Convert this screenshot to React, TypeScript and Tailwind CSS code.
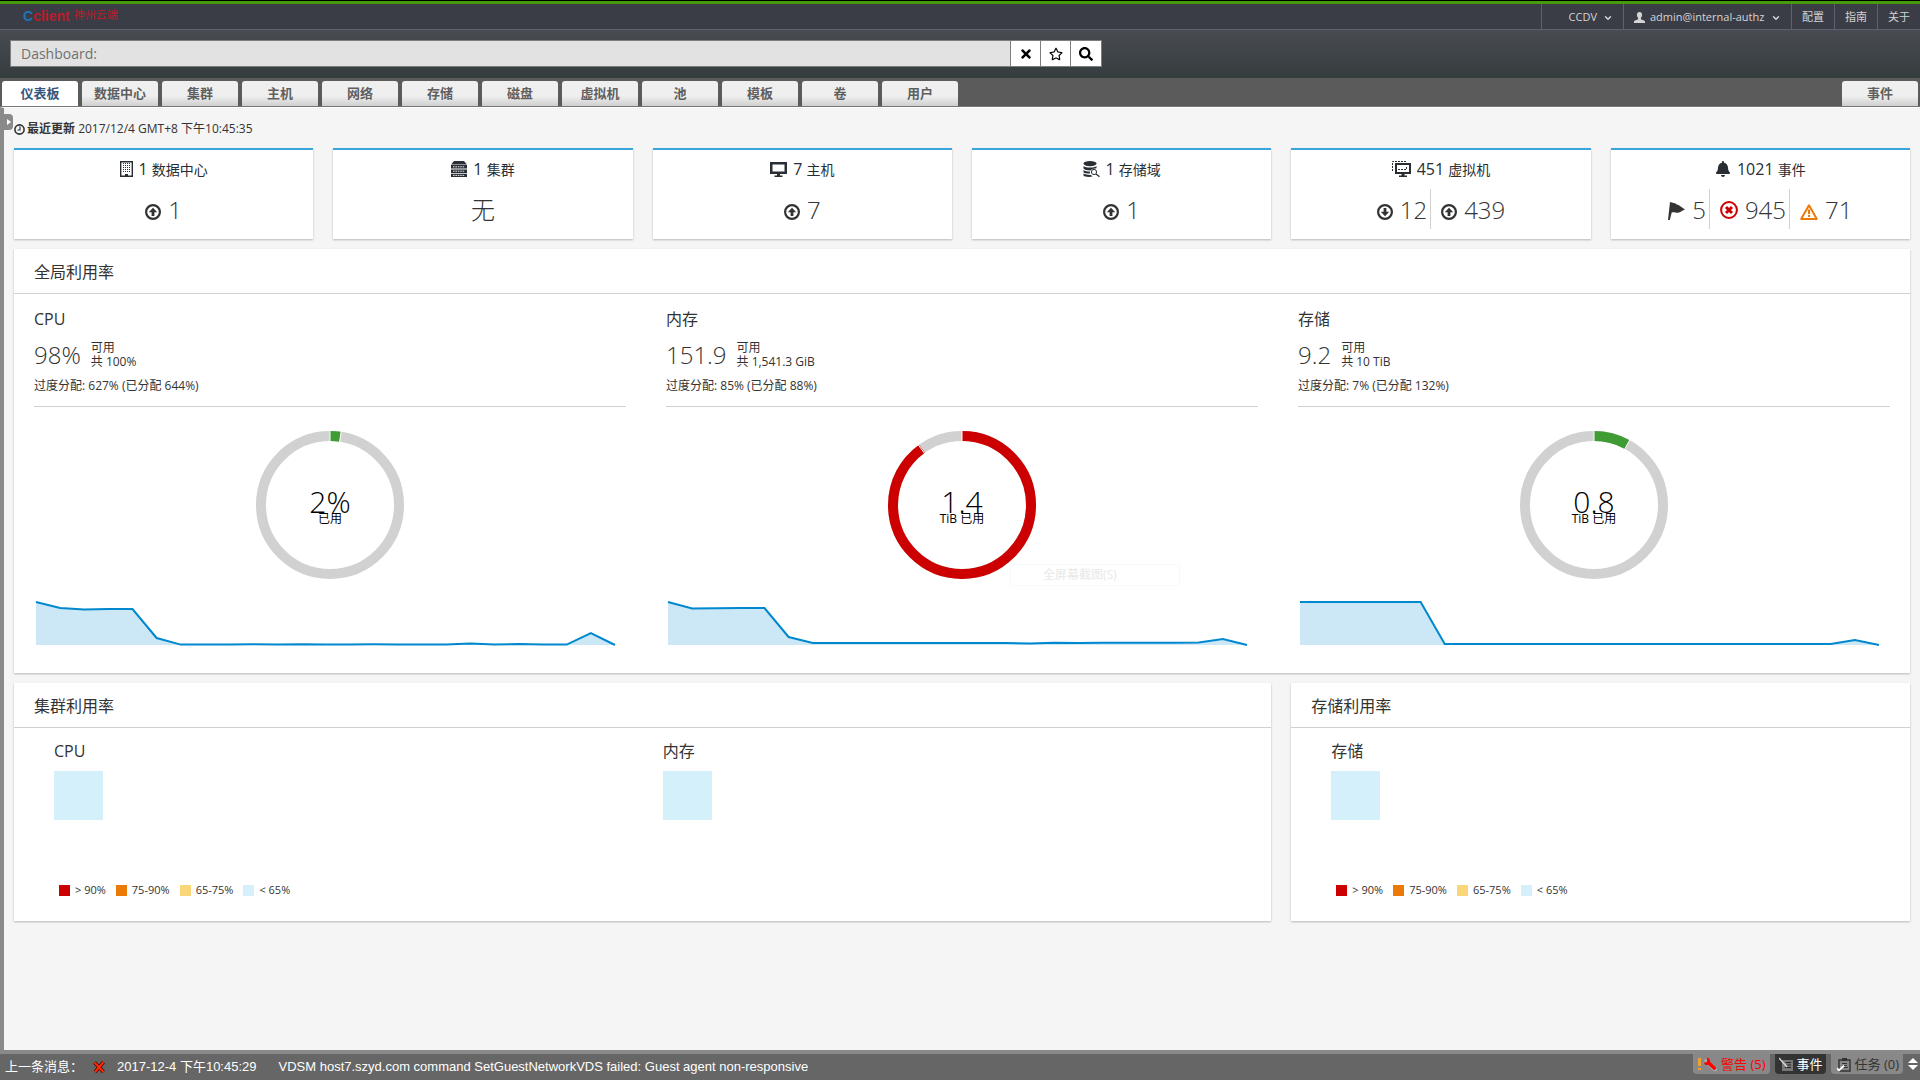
import React, { useState } from 'react';
import { FaBell, FaRegStar, FaSearch, FaTimes } from 'react-icons/fa';
import { ChevronDown } from 'lucide-react';

type IconProps = { className?: string };

const ClockIcon: React.FC<IconProps> = ({ className }) => (
  <svg viewBox="0 0 11 11" className={className} aria-hidden="true">
    <circle cx="5.500" cy="5.500" r="4.600" fill="none" stroke="currentColor" strokeWidth="1.600" />
    <path d="M6 2.500V6H3.500" fill="none" stroke="currentColor" strokeWidth="1.200" />
  </svg>
);

const BuildingIcon: React.FC<IconProps> = ({ className }) => (
  <svg viewBox="0 0 13 16" className={className} aria-hidden="true">
    <path d="M0.700 0.700h11.600v14.600H0.700z" fill="none" stroke="currentColor" strokeWidth="1.400" />
    <path d="M3 2.500h7M3 4.500h7M3 6.500h7M3 8.500h7M3 10.500h7" stroke="currentColor" strokeDasharray="1 1" fill="none" />
    <path d="M5 13h3v3H5z" fill="currentColor" />
  </svg>
);

const ClusterIcon: React.FC<IconProps> = ({ className }) => (
  <svg viewBox="0 0 16 16" className={className} aria-hidden="true">
    <path d="M3 0h10l3 3.500H0zM0 4h16v3.600H0zM0 8.400h16V12H0zM0 12.800h16V16H0z" fill="currentColor" />
    <path d="M2 5.800h12M2 10.200h12M2 14.400h12" stroke="#fff" strokeWidth="0.900" strokeDasharray="1.600 0.800" />
  </svg>
);

const ScreenIcon: React.FC<IconProps> = ({ className }) => (
  <svg viewBox="0 0 17 15" className={className} aria-hidden="true">
    <path d="M0 0h17v12H0zM2.500 2.500v7h12v-7z" fill="currentColor" fillRule="evenodd" />
    <path d="M7 12h3v1.500h2.500V15h-8v-1.500H7z" fill="currentColor" />
  </svg>
);

const StorageIcon: React.FC<IconProps> = ({ className }) => (
  <svg viewBox="0 0 17 16" className={className} aria-hidden="true">
    <ellipse cx="7" cy="2.600" rx="6.500" ry="2.600" fill="currentColor" />
    <path d="M0.500 5c2 2 11 2 13 0v2.200l-3 .6c-1.500.2-2.500 1.200-3 1.800C4 9.500 1 8.800.5 7.600z" fill="currentColor" />
    <path d="M0.500 9c1.200 1.200 4 1.600 6.300 1.600l.2 2c-3 0-5.700-.4-6.500-1.400zM.5 12.600c1.200 1 4.500 1.500 7.500 1.400l1.500 1.600C6 16.300 1.500 16 .5 14.500z" fill="currentColor" />
    <circle cx="11" cy="11" r="2.600" fill="none" stroke="currentColor" />
    <path d="M13 13l3.500 2.700" stroke="currentColor" strokeWidth="1.300" />
  </svg>
);

const VirtualMachineIcon: React.FC<IconProps> = ({ className }) => (
  <svg viewBox="0 0 19 16" className={className} aria-hidden="true">
    <path d="M0.500 10V0.500h14" fill="none" stroke="currentColor" strokeDasharray="2 1" />
    <path d="M3 2h16v11H3zM5 4v7h12V4z" fill="currentColor" fillRule="evenodd" />
    <path d="M6 8.500h8.500V5" fill="none" stroke="currentColor" strokeDasharray="2 1" />
    <path d="M9.500 13h3v1.500H15V16H7v-1.500h2.500z" fill="currentColor" />
  </svg>
);

const UpIcon: React.FC<IconProps> = ({ className }) => (
  <svg viewBox="0 0 16 16" className={className} aria-hidden="true">
    <circle cx="8" cy="8" r="6.900" fill="none" stroke="currentColor" strokeWidth="2.200" />
    <path d="M8 3.800l4.200 4.400H9.400V12H6.600V8.200H3.800z" fill="currentColor" />
  </svg>
);

const DownIcon: React.FC<IconProps> = ({ className }) => (
  <svg viewBox="0 0 16 16" className={className} aria-hidden="true">
    <circle cx="8" cy="8" r="6.900" fill="none" stroke="currentColor" strokeWidth="2.200" />
    <path d="M8 12.200l4.200-4.400H9.400V4H6.600v3.800H3.800z" fill="currentColor" />
  </svg>
);

const FlagIcon: React.FC<IconProps> = ({ className }) => (
  <svg viewBox="0 0 17 18" className={className} aria-hidden="true">
    <path d="M2 0l1.800.4c3.200.2 4.200 1.800 6.700 2.600l6.500 4.500c-2.500.6-4.500 3.300-7 3.300-2.400 0-4-1-6.300-.4L1.800 18H0z" fill="currentColor" />
  </svg>
);

const ErrorIcon: React.FC<IconProps> = ({ className }) => (
  <svg viewBox="0 0 18 18" className={className} aria-hidden="true">
    <circle cx="9" cy="9" r="7.900" fill="none" stroke="currentColor" strokeWidth="2" />
    <path d="M6 6l6 6M12 6l-6 6" stroke="currentColor" strokeWidth="3" />
  </svg>
);

const WarningIcon: React.FC<IconProps> = ({ className }) => (
  <svg viewBox="0 0 18 16" className={className} aria-hidden="true">
    <path d="M9 1.300L16.800 15H1.200z" fill="none" stroke="currentColor" strokeWidth="2" strokeLinejoin="round" />
    <path d="M9 5.500V10M9 11v2" stroke="currentColor" strokeWidth="2.200" />
  </svg>
);

const UserIcon: React.FC<IconProps> = ({ className }) => (
  <svg viewBox="0 0 11 11" className={className} aria-hidden="true">
    <path d="M5.500 0c1.700 0 2.600 1.200 2.600 2.800 0 1.500-.7 2.500-1.200 3.200v1.300L11 9v2H0V9l4.100-1.700V6C3.600 5.300 2.900 4.300 2.900 2.800 2.900 1.200 3.800 0 5.500 0z" fill="currentColor" />
  </svg>
);

const AlertToolIcon: React.FC<IconProps> = ({ className }) => (
  <svg viewBox="0 0 20 14" className={className} aria-hidden="true">
    <path d="M1 1h3v8H1zM1 11h3v2H1z" fill="#f0a030" />
    <path d="M9.500 4l5.500 5.500 3 3" stroke="#aaa" strokeWidth="4.500" strokeLinecap="round" />
    <path d="M7 5.500l2.500-.2.800-1.500L9.500.8c2.300 0 3.800 1.500 3.500 3.700l6 6c.8 1.200-1.200 3.200-2.400 2.200L11 7.800C9.500 8.500 7.300 7.700 7 5.500z" fill="#f00" />
  </svg>
);

const EventsIcon: React.FC<IconProps> = ({ className }) => (
  <svg viewBox="0 0 14 14" className={className} aria-hidden="true">
    <path d="M3 3h11v11H3z" fill="#777" />
    <path d="M7 5.500h5M8.500 8h3.500M6 10.500h6" stroke="#222" />
    <path d="M0 1l8 9" stroke="#ddd" strokeWidth="1.300" />
  </svg>
);

const TasksIcon: React.FC<IconProps> = ({ className }) => (
  <svg viewBox="0 0 14 15" className={className} aria-hidden="true">
    <path d="M2 3h11v11H2z" fill="none" stroke="#333" strokeWidth="1.400" />
    <path d="M5 1h5v3H5z" fill="#333" />
    <path d="M5 6.500h5M5 8.500h5M7 10.500h4" stroke="#333" />
    <path d="M0 11l2 2.500 5-5" fill="none" stroke="#fff" strokeWidth="1.800" />
  </svg>
);

const MAIN_TABS = ['仪表板', '数据中心', '集群', '主机', '网络', '存储', '磁盘', '虚拟机', '池', '模板', '卷', '用户'];

type Status = { icon?: React.ReactNode; value: string };

const INVENTORY: { icon: React.ReactNode; count: number; label: string; statuses: Status[] }[] = [
  {
    icon: <BuildingIcon className="h-4 w-[13px]" />,
    count: 1,
    label: '数据中心',
    statuses: [{ icon: <UpIcon className="mt-1 size-4" />, value: '1' }],
  },
  {
    icon: <ClusterIcon className="h-4 w-4" />,
    count: 1,
    label: '集群',
    statuses: [{ value: '无' }],
  },
  {
    icon: <ScreenIcon className="h-[15px] w-[17px]" />,
    count: 7,
    label: '主机',
    statuses: [{ icon: <UpIcon className="mt-1 size-4" />, value: '7' }],
  },
  {
    icon: <StorageIcon className="h-4 w-[17px]" />,
    count: 1,
    label: '存储域',
    statuses: [{ icon: <UpIcon className="mt-1 size-4" />, value: '1' }],
  },
  {
    icon: <VirtualMachineIcon className="h-4 w-[19px]" />,
    count: 451,
    label: '虚拟机',
    statuses: [
      { icon: <DownIcon className="mt-1 size-4" />, value: '12' },
      { icon: <UpIcon className="mt-1 size-4" />, value: '439' },
    ],
  },
  {
    icon: <FaBell className="size-4" />,
    count: 1021,
    label: '事件',
    statuses: [
      { icon: <FlagIcon className="mt-0.5 h-[18px] w-[17px]" />, value: '5' },
      { icon: <ErrorIcon className="size-[18px] text-[#c00]" />, value: '945' },
      { icon: <WarningIcon className="mt-1 h-4 w-[18px] text-[#ec7a08]" />, value: '71' },
    ],
  },
];

const UTILIZATION = [
  {
    title: 'CPU',
    available: '98%',
    total: '共 100%',
    overcommit: '过度分配: 627% (已分配 644%)',
    used: '2%',
    unit: '已用',
    percent: 2.4,
    color: '#3f9c35',
    history: [43, 37, 35.5, 36, 36, 7, 0.4, 0.4, 0.6, 0.8, 0.4, 0.7, 0.4, 0.6, 0.7, 0.6, 0.6, 0.4, 1.4, 0.4, 0.9, 0.4, 0.4, 12, 0],
  },
  {
    title: '内存',
    available: '151.9',
    total: '共 1,541.3 GiB',
    overcommit: '过度分配: 85% (已分配 88%)',
    used: '1.4',
    unit: 'TiB 已用',
    percent: 90,
    color: '#cc0000',
    history: [43, 36.6, 36.8, 37, 37, 8, 2, 2, 2, 2, 2, 2, 2, 2, 2, 1.6, 2.2, 2, 2.2, 2.3, 2.3, 2.3, 2.6, 6, 0],
  },
  {
    title: '存储',
    available: '9.2',
    total: '共 10 TiB',
    overcommit: '过度分配: 7% (已分配 132%)',
    used: '0.8',
    unit: 'TiB 已用',
    percent: 8,
    color: '#3f9c35',
    history: [43, 43, 43, 43, 43, 43, 1, 1, 1, 1, 1, 1, 1, 1, 1, 1, 1, 1, 1, 1, 1, 1, 1, 5, 0],
  },
];

const LEGEND = [
  { label: '> 90%', swatch: 'bg-[#cc0000]' },
  { label: '75-90%', swatch: 'bg-[#ec7a08]' },
  { label: '65-75%', swatch: 'bg-[#f9d67a]' },
  { label: '< 65%', swatch: 'bg-[#d4f0fa]' },
];

const CARD = 'bg-white shadow-[0_1px_2px_rgba(3,3,3,0.25)]';

const Donut: React.FC<{ percent: number; color: string; value: string; unit: string }> = ({ percent, color, value, unit }) => {
  const radius = 69;
  const length = 2 * Math.PI * radius;
  const angle = (percent / 100) * 2 * Math.PI;
  const edge = (r: number) => `${75 + r * Math.sin(angle)} ${75 - r * Math.cos(angle)}`;
  return (
    <svg viewBox="0 0 150 150" className="mx-auto block size-[150px]" role="img" aria-label={`${value} ${unit}`}>
      <circle cx="75" cy="75" r={radius} fill="none" stroke="#d1d1d1" strokeWidth="10" />
      <circle
        cx="75"
        cy="75"
        r={radius}
        fill="none"
        stroke={color}
        strokeWidth="10"
        strokeDasharray={`${(length * percent) / 100} ${length}`}
        transform="rotate(-90 75 75)"
      />
      <path d={`M75 0V12M${edge(63)}L${edge(75)}`} stroke="#fff" strokeWidth="1" />
      <text x="75" y="83" textAnchor="middle" className="fill-black text-[30px] font-light">{value}</text>
      <text x="75" y="93" textAnchor="middle" className="fill-black text-xs">{unit}</text>
    </svg>
  );
};

const Sparkline: React.FC<{ data: number[] }> = ({ data }) => {
  const points = data.map((v, i) => `${2 + (i * 579) / (data.length - 1)} ${45 - v}`);
  return (
    <svg viewBox="0 0 592 46" preserveAspectRatio="none" className="block h-[46px] w-full" aria-hidden="true">
      <path d={`M2 45L${points.join('L')}Z`} fill="#cce7f6" />
      <path d={`M${points.join('L')}`} fill="none" stroke="#0088ce" strokeWidth="2" />
    </svg>
  );
};

const HeatBlock: React.FC<{ title: string }> = ({ title }) => (
  <div>
    <h3 className="text-base leading-5">{title}</h3>
    <div className="mt-2.5 size-[49px] bg-[#d4f0fa]" />
  </div>
);

const HeatLegend: React.FC = () => (
  <ul className="mt-[62px] flex gap-2.5 pl-[5px] text-[11px]">
    {LEGEND.map(item => (
      <li key={item.label} className="flex items-center gap-[5px] leading-4">
        <span className={`size-[11px] ${item.swatch}`} />
        {item.label}
      </li>
    ))}
  </ul>
);

const PanelTitle: React.FC<{ children: React.ReactNode }> = ({ children }) => (
  <h2 className="border-b border-[#d1d1d1] px-5 pt-3 pb-2.5 text-base leading-[22px]">{children}</h2>
);

export default function App() {
  const [activeTab, setActiveTab] = useState('仪表板');
  const [query, setQuery] = useState('Dashboard:');

  const tabClass = (tab: string) =>
    `h-[25px] w-[76px] rounded-t-[3px] pb-0.5 text-[13px] leading-[22px] font-bold ${
      tab === activeTab ? 'bg-white text-[#35567d]' : 'bg-linear-to-b from-[#efefef] from-60% to-[#cfcfcf] text-[#5f5f5f]'
    }`;

  return (
    <div lang="zh-CN" className="flex min-h-screen flex-col bg-[#f5f5f5] font-['Open_Sans','Noto_Sans_CJK_SC',sans-serif] text-[#333]">
      <header>
        <div className="h-1 border-t border-black bg-[#459b0c]" />
        <div className="flex h-[26px] items-stretch border-b border-[#5f6170] bg-[#3a3d45] text-[11px] text-[#d4d4d4]">
          <a href="#home" className="flex items-center gap-1 pb-0.5 pl-[23px] font-['Liberation_Sans','Noto_Sans_CJK_SC',sans-serif] text-[#b91c2b]">
            <span className="text-sm font-bold"><span className="text-[#1c75b8]">C</span>client</span>
            <span>神州云端</span>
          </a>
          <nav className="ml-auto flex">
            <button className="flex w-[82px] items-center justify-end gap-1.5 border-l border-[#5f6170] pt-0.5 pr-2.5">
              CCDV <ChevronDown className="size-2.5" strokeWidth={3.5} />
            </button>
            <button className="flex w-[168px] items-center gap-[5px] border-l border-[#5f6170] px-2.5 pt-0.5">
              <UserIcon className="size-[11px]" /> admin@internal-authz <ChevronDown className="ml-auto size-2.5" strokeWidth={3.5} />
            </button>
            <a href="#configure" className="flex items-center border-l border-[#5f6170] px-2.5 pt-0.5">配置</a>
            <a href="#guide" className="flex items-center border-l border-[#5f6170] px-2.5 pt-0.5">指南</a>
            <a href="#about" className="flex items-center border-l border-[#5f6170] px-2.5 pt-0.5">关于</a>
          </nav>
        </div>
        <div className="h-12 bg-linear-to-b from-[#484c51] to-[#353c3e] px-2.5 pt-2.5">
          <form className="flex h-[27px] w-[58%] max-w-[1092px] border border-[#7d7d7d] bg-white text-black" onSubmit={e => e.preventDefault()}>
            <input
              aria-label="搜索"
              value={query}
              onChange={e => setQuery(e.target.value)}
              className="min-w-0 flex-1 bg-[#e2e2e2] px-2.5 text-sm text-[#707070] outline-none"
            />
            <button type="button" aria-label="清除" className="flex w-[30px] items-center justify-center border-l border-[#7d7d7d]" onClick={() => setQuery('')}>
              <FaTimes className="size-3.5" />
            </button>
            <button type="button" aria-label="书签" className="flex w-[30px] items-center justify-center border-l border-[#7d7d7d]">
              <FaRegStar className="size-3.5" />
            </button>
            <button type="submit" aria-label="查找" className="flex w-[31px] items-center justify-center border-l border-[#7d7d7d]">
              <FaSearch className="size-3.5" />
            </button>
          </form>
        </div>
        <nav className="flex gap-1 border-b border-[#777] bg-[#5b5b5b] px-0.5 pt-[3px]">
          {MAIN_TABS.map(tab => (
            <button key={tab} className={tabClass(tab)} onClick={() => setActiveTab(tab)}>{tab}</button>
          ))}
          <button className={`ml-auto ${tabClass('事件')}`} onClick={() => setActiveTab('事件')}>事件</button>
        </nav>
      </header>

      <main className="relative flex-1 border-t border-l-4 border-t-white border-l-[#8a8a8a] pr-2.5 pb-5 pl-2.5">
        <button aria-label="展开" className="absolute top-1.5 left-0 flex h-4 w-[9px] items-center justify-center rounded-r-[4px] bg-[#8a8a8a]">
          <span className="border-y-[3px] border-l-[4px] border-y-transparent border-l-white" />
        </button>

        <p className="flex items-center gap-0.5 pt-[11px] text-xs leading-5">
          <ClockIcon className="size-[11px]" />
          <span><strong>最近更新</strong> 2017/12/4 GMT+8 下午10:45:35</span>
        </p>

        <section className="mt-[9px] grid grid-cols-6 gap-5">
          {INVENTORY.map(card => (
            <article key={card.label} className={`h-[91px] border-t-2 border-[#39a5dc] ${CARD}`}>
              <h2 className="flex items-center justify-center gap-1.5 pt-[7px] text-base leading-6 text-[#292e34]">
                {card.icon}
                <span>{card.count} <span className="text-sm">{card.label}</span></span>
              </h2>
              <div className="mt-2 flex justify-center">
                {card.statuses.map((status, i) => (
                  <span
                    key={status.value}
                    className={`flex h-10 items-center gap-[7px] pt-0.5 text-2xl leading-9 font-light ${i > 0 ? 'border-l border-[#d1d1d1] pl-2.5' : ''} ${
                      i < card.statuses.length - 1 ? 'pr-[3px]' : ''
                    }`}
                  >
                    {status.icon}
                    <span>{status.value}</span>
                  </span>
                ))}
              </div>
            </article>
          ))}
        </section>

        <section className={`mt-2.5 ${CARD}`}>
          <PanelTitle>全局利用率</PanelTitle>
          <div className="grid grid-cols-3">
            {UTILIZATION.map(item => (
              <div key={item.title} className="px-5 pt-3.5 pb-[27px]">
                <h3 className="text-base leading-[22px]">{item.title}</h3>
                <div className="mt-[7px] flex items-center gap-2.5">
                  <span className="text-2xl leading-9 font-light">{item.available}</span>
                  <span className="text-xs leading-[14px]">可用<br />{item.total}</span>
                </div>
                <p className="border-b border-[#d1d1d1] pt-[3px] pb-2.5 text-xs leading-5">{item.overcommit}</p>
                <div className="pt-[23px] pb-5">
                  <Donut percent={item.percent} color={item.color} value={item.used} unit={item.unit} />
                </div>
                <Sparkline data={item.history} />
              </div>
            ))}
          </div>
        </section>

        <div className="mt-2.5 grid grid-cols-6 gap-5">
          <section className={`col-span-4 ${CARD}`}>
            <PanelTitle>集群利用率</PanelTitle>
            <div className="px-10 pt-[13px] pb-[23px]">
              <div className="grid grid-cols-2 gap-10">
                <HeatBlock title="CPU" />
                <HeatBlock title="内存" />
              </div>
              <HeatLegend />
            </div>
          </section>
          <section className={`col-span-2 ${CARD}`}>
            <PanelTitle>存储利用率</PanelTitle>
            <div className="px-10 pt-[13px] pb-[23px]">
              <HeatBlock title="存储" />
              <HeatLegend />
            </div>
          </section>
        </div>

        {/* fading context menu entry */}
        <div className="absolute top-[456px] left-[1006px] h-[22px] w-[170px] border border-[#f7fafa] pl-8 text-xs leading-5 text-[#e8e8e8]">
          全屏幕截图(S)
        </div>
      </main>

      <footer className="flex h-[30px] items-start border-t-4 border-[#8a8a8a] bg-[#666] font-['Liberation_Sans','Noto_Sans_CJK_SC',sans-serif] text-[13px] text-white">
        <p className="flex items-center pl-[5px] leading-[26px]">
          <span>上一条消息：</span>
          <svg viewBox="0 0 12 12" className="ml-2.5 h-3 w-3" aria-hidden="true">
            <path d="M1.500 1.500l9 9.500M10.500 1L2 11" stroke="#400" strokeWidth="3.600" />
            <path d="M1.500 1.500l9 9.500M10.500 1L2 11" stroke="#ff2a00" strokeWidth="2.200" />
          </svg>
          <span className="ml-3">2017-12-4 下午10:45:29</span>
          <span className="ml-[22px]">VDSM host7.szyd.com command SetGuestNetworkVDS failed: Guest agent non-responsive</span>
        </p>
        <div className="ml-auto flex gap-[5px] pr-0.5 font-['Open_Sans','Noto_Sans_CJK_SC',sans-serif] leading-5">
          <button className="flex h-5 items-center gap-1 rounded-b-[4px] bg-[#888] px-1 text-[#f00]">
            <AlertToolIcon className="h-3.5 w-5" /> 警告 (5)
          </button>
          <button className="flex h-5 items-center gap-1 rounded-b-[4px] bg-[#333] pr-[3px] pl-1">
            <EventsIcon className="size-3.5" /> 事件
          </button>
          <button className="flex h-5 items-center gap-1 rounded-b-[4px] bg-[#888] pr-1 pl-1.5 text-[#333]">
            <TasksIcon className="h-[15px] w-3.5" /> 任务 (0)
          </button>
          <button aria-label="调整高度" className="flex h-5 w-2.5 flex-col items-center justify-center gap-0.5">
            <span className="border-x-[5px] border-b-[5px] border-x-transparent border-b-white" />
            <span className="border-x-[5px] border-t-[5px] border-x-transparent border-t-white" />
          </button>
        </div>
      </footer>
    </div>
  );
}
